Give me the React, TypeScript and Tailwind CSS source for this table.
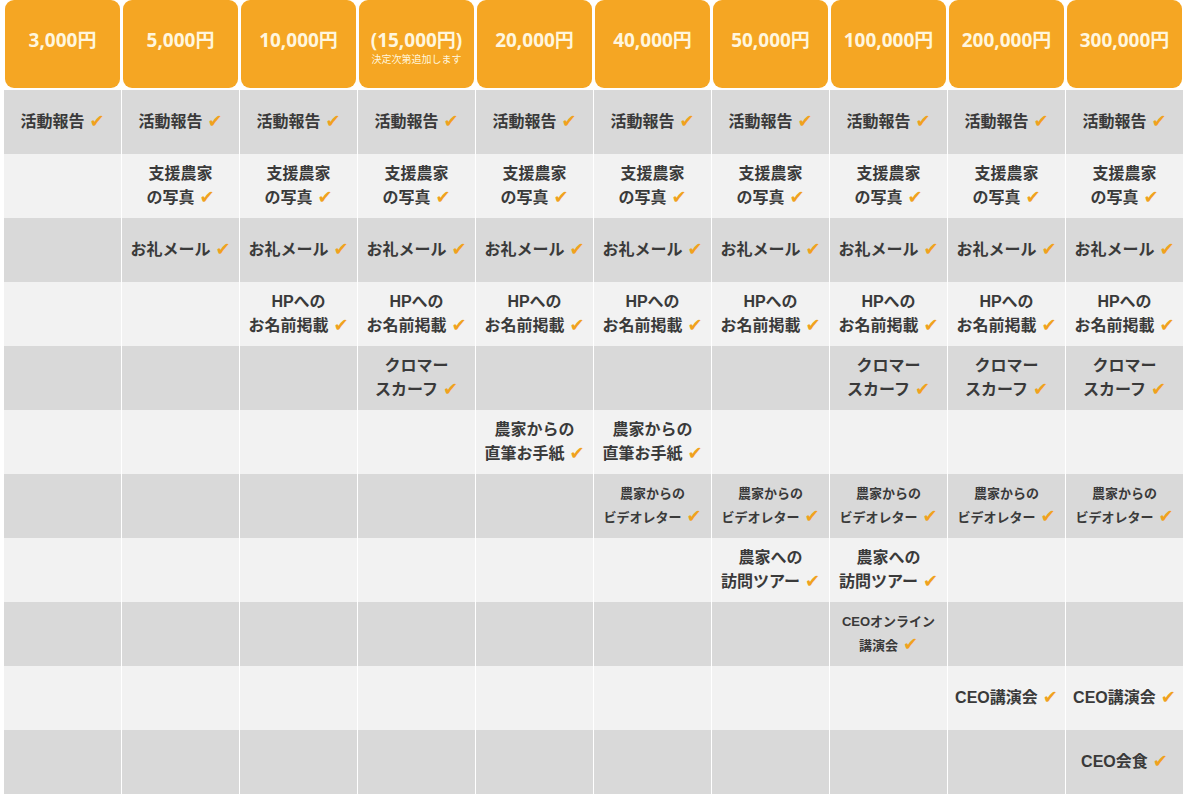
const prices = [
  "3,000円",
  "5,000円",
  "10,000円",
  "(15,000円)",
  "20,000円",
  "40,000円",
  "50,000円",
  "100,000円",
  "200,000円",
  "300,000円",
]

type Row = { text: string[]; cols: number[]; small?: boolean }

const rows: Row[] = [
  { text: ["活動報告"], cols: [1, 2, 3, 4, 5, 6, 7, 8, 9, 10] },
  { text: ["支援農家", "の写真"], cols: [2, 3, 4, 5, 6, 7, 8, 9, 10] },
  { text: ["お礼メール"], cols: [2, 3, 4, 5, 6, 7, 8, 9, 10] },
  { text: ["HPへの", "お名前掲載"], cols: [3, 4, 5, 6, 7, 8, 9, 10] },
  { text: ["クロマー", "スカーフ"], cols: [4, 8, 9, 10] },
  { text: ["農家からの", "直筆お手紙"], cols: [5, 6] },
  { text: ["農家からの", "ビデオレター"], cols: [6, 7, 8, 9, 10], small: true },
  { text: ["農家への", "訪問ツアー"], cols: [7, 8] },
  { text: ["CEOオンライン", "講演会"], cols: [8], small: true },
  { text: ["CEO講演会"], cols: [9, 10] },
  { text: ["CEO会食"], cols: [10] },
]

function Check() {
  return <span className="ml-[5px] text-[#f0a21e] font-['DejaVu_Sans'] font-normal text-[18px] leading-none">✔</span>
}

function Cell({ row }: { row: Row }) {
  return (
    <div
      className={`flex flex-col items-center justify-center text-center text-[#3a3a3a] font-semibold ${
        row.small ? "text-[13px] leading-[24px]" : "text-[16px] leading-[24px]"
      }`}
    >
      {row.text.map((line, i) => (
        <div key={i} className="whitespace-nowrap">
          {line}
          {i === row.text.length - 1 && <Check />}
        </div>
      ))}
    </div>
  )
}

export default function App() {
  return (
    <div className="w-[1183px] h-[795px] bg-white pl-[4px] overflow-hidden font-['Liberation_Sans','Noto_Sans_CJK_JP',sans-serif]">
      <div className="grid grid-cols-[repeat(10,117px)] gap-x-px">
        {prices.map((p, i) => (
          <div key={p} className="px-[1px] pb-[2px]">
            <div className="h-[88px] rounded-[9px] bg-[#f5a623] flex flex-col items-center justify-center text-[#fff6de]">
              <div className="font-['Open_Sans','Noto_Sans_CJK_JP',sans-serif] font-bold text-[19px] leading-[24px] mt-[-8px]">
                {p}
              </div>
              {i === 3 && (
                <div className="font-['Noto_Sans_CJK_JP',sans-serif] text-[10px] leading-[14px] mb-[-14px]">
                  決定次第追加します
                </div>
              )}
            </div>
          </div>
        ))}
      </div>
      {rows.map((row, r) => (
        <div key={r} className="grid grid-cols-[repeat(10,117px)] gap-x-px">
          {prices.map((_, c) => (
            <div
              key={c}
              className={`h-[64px] flex items-center justify-center ${r % 2 === 0 ? "bg-[#d9d9d9]" : "bg-[#f2f2f2]"}`}
            >
              {row.cols.includes(c + 1) && <Cell row={row} />}
            </div>
          ))}
        </div>
      ))}
    </div>
  )
}
